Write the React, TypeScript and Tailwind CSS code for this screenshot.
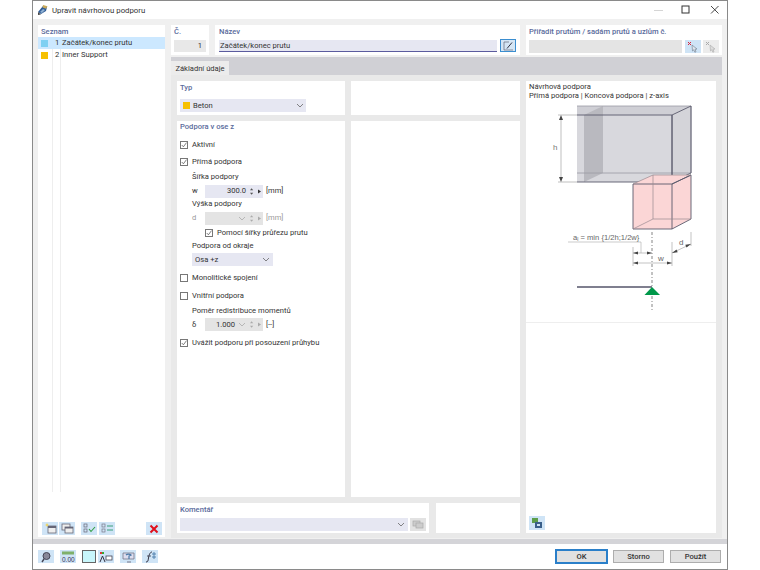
import React from "react";

const Chevron = ({ c = "#666" }: { c?: string }) => (
  <svg width="8" height="5" viewBox="0 0 8 5" className="shrink-0"><path d="M1 1l3 3 3-3" fill="none" stroke={c} strokeWidth="0.8" /></svg>
);

const Check = ({ on, className = "" }: { on?: boolean; className?: string }) => (
  <span className={`flex h-[8px] w-[8px] shrink-0 items-center justify-center border border-[#777] bg-white ${className}`}>
    {on && <svg width="8" height="8" viewBox="0 0 8 8"><path d="M1 4l2.200 2.400L7.400 0.800" fill="none" stroke="#444" strokeWidth="0.9" /></svg>}
  </span>
);

const CheckRow = ({ label, on, h = "h-[17px]" }: { label: string; on?: boolean; h?: string }) => (
  <div className={`flex items-center ${h}`}>
    <Check on={on} />
    <span className="ml-[4px]">{label}</span>
  </div>
);

const Spin = ({ dim }: { dim?: boolean }) => (
  <svg width="16" height="9" viewBox="0 0 16 9" className="shrink-0">
    <path d="M3 3.200L4.600 1.200 6.200 3.200zM3 5.800l1.600 2 1.600-2z" fill={dim ? "#aaa" : "#555"} />
    <path d="M11 2.500l3 2-3 2z" fill={dim ? "#aaa" : "#333"} />
  </svg>
);

const Panel = ({ className = "", children }: { className?: string; children?: React.ReactNode }) => (
  <div className={`bg-white ${className}`}>{children}</div>
);

const Head = ({ children, className = "" }: { children: React.ReactNode; className?: string }) => (
  <div className={`font-medium leading-[12px] text-[#5a6b9c] ${className}`}>{children}</div>
);

const ToolBtn = ({ children, className = "bg-[#cfe4f6]" }: { children?: React.ReactNode; className?: string }) => (
  <div className={`flex h-[13px] w-[16px] shrink-0 items-center justify-center ${className}`}>{children}</div>
);

const DialogBtn = ({ label, primary }: { label: string; primary?: boolean }) => (
  <div className={`flex h-[13px] w-[51px] items-center justify-center border bg-[#e1e1e1] font-medium text-[#333] ${primary ? "border-[#2a7fc9] outline outline-[0.5px] outline-[#2a7fc9]" : "border-[#adadad]"}`}>
    {label}
  </div>
);

const Win = () => (
  <div className="flex items-center">
    <svg width="12" height="12" viewBox="0 0 12 12" className="mr-[15px]"><path d="M1 6.500h9" stroke="#d5d5d5" strokeWidth="1" /></svg>
    <svg width="12" height="12" viewBox="0 0 12 12" className="mr-[17px]"><rect x="2" y="2" width="7" height="7" fill="none" stroke="#333" strokeWidth="1" /></svg>
    <svg width="12" height="12" viewBox="0 0 12 12" className="mr-[6px]"><path d="M2 2l7.500 7.500M9.500 2L2 9.500" stroke="#333" strokeWidth="0.9" /></svg>
  </div>
);

const Diagram = () => (
  <svg width="190" height="216" viewBox="526 102 190 216" className="block">
    <path d="M577 106H691V173H577z" fill="#dcdce0" />
    <path d="M577 115H672V182H577z" fill="#d8d8dd" />
    <path d="M577 106H691L672 115H577z" fill="#cfcfd5" />
    <path d="M672 115L691 106V173L672 182z" fill="#d4d4d9" />
    <path d="M584 115L603 106V173L584 182z" fill="#b9b9bf" />
    <path d="M577 106H691V173H577" fill="none" stroke="#9a9aa3" strokeWidth="0.8" />
    <path d="M577 115H672V182H577" fill="none" stroke="#5a5a6c" strokeWidth="0.9" />
    <path d="M672 115L691 106V173L672 182z" fill="none" stroke="#5a5a6c" strokeWidth="0.9" />
    <path d="M558 115H577M558 182H577M561 118V179" stroke="#a5a5a5" strokeWidth="0.7" fill="none" />
    <path d="M561 115l-2 5h4zM561 182l-2-5h4z" fill="#444" />
    <text x="553" y="150" fontSize="8" fill="#777" fontFamily="Liberation Sans, sans-serif">h</text>
    <path d="M633 184L653 175H691V219L672 229H633z" fill="#fbd6d6" />
    <path d="M633 184H672L691 175M672 184V229M633 184V229H672L691 219V175L672 184" fill="none" stroke="#5a5a6c" strokeWidth="0.9" />
    <path d="M633 229L653 219H691M653 175V219M633 184L653 175H691" fill="none" stroke="#9a8a90" strokeWidth="0.7" />
    <text x="573" y="240" fontSize="7.600" fill="#666" fontFamily="Liberation Sans, sans-serif">a<tspan fontSize="5" dy="1">l</tspan><tspan dy="-1"> = min {"{"}1/2h;1/2w{"}"}</tspan></text>
    <path d="M568 242H641V253" fill="none" stroke="#b5b5b5" strokeWidth="0.7" />
    <path d="M652 232V310" stroke="#666" strokeWidth="0.8" strokeDasharray="3 2 1 2" />
    <path d="M633 247V266M672 242V266M691 232V246M633 253H652M633 263H672M672 253L691 244" stroke="#aaa" strokeWidth="0.7" fill="none" />
    <path d="M633 253l5-1.500v3zM652 253l-5-1.500v3zM633 263l5-1.500v3zM672 263l-5-1.500v3zM672 253l4.500-3.400 1.200 2.700zM691 244l-4.500 3.400-1.200-2.700z" fill="#444" />
    <text x="658" y="261" fontSize="8" fill="#666" fontFamily="Liberation Sans, sans-serif">w</text>
    <text x="679" y="245" fontSize="8" fill="#666" fontFamily="Liberation Sans, sans-serif">d</text>
    <path d="M577 287H652" stroke="#55556a" strokeWidth="1.400" />
    <path d="M644.500 295L652 287L660 295z" fill="#00984a" />
  </svg>
);

const Cursor = ({ dim }: { dim?: boolean }) => (
  <svg width="14" height="12" viewBox="0 0 14 12">
    <path d="M2 1l3 3M5 1L2 4" stroke={dim ? "#aaa" : "#d9263a"} strokeWidth="1" />
    <path d="M6 4l5 4-2 .3 1 2.500-1.200.4-1-2.400L6.500 10z" fill={dim ? "#ddd" : "#dfe6ee"} stroke={dim ? "#aaa" : "#6b7a8c"} strokeWidth="0.6" />
  </svg>
);

export default function App() {
  return (
    <div className="h-[570px] w-[760px] bg-white pl-[32px] font-['Roboto',sans-serif] text-[7.6px] leading-[12px] text-[#333]">
      <div className="flex h-[570px] w-[696px] flex-col border border-[#8a8a8a]">
        {/* title bar */}
        <div className="flex h-[18px] shrink-0 items-center justify-between bg-white pl-[4px]">
          <div className="flex items-center">
            <svg width="12" height="12" viewBox="0 0 12 12" className="mr-[2px]">
              <path d="M1 8l5-6 4 1-1 4-5 3z" fill="#2f5c96" />
              <path d="M6 1l4.500 1.200-1.500 2.500-3.500-1.200z" fill="#c9a95a" />
              <path d="M1 8l3 2.500-3 .5z" fill="#444" />
              <path d="M3 8l3-3 2 1-3 3z" fill="#8fb0d2" />
            </svg>
            <span className="ml-[1px] pt-[2px] text-[7.800px] text-[#333]">Upravit návrhovou podporu</span>
          </div>
          <Win />
        </div>

        {/* body */}
        <div className="flex h-0 flex-1 bg-[#f0f0f0] pl-[5px] pr-[5px] pt-[6px]">
          <Panel className="relative flex h-[512px] w-[127px] shrink-0 flex-col">
            <Head className="ml-[3px] mt-[0px] h-[12px] pt-[1px]">Seznam</Head>
            <div className="relative flex-1">
              <div className="absolute bottom-[30px] left-[14px] top-0 w-px bg-[#eeeeee]" />
              <div className="absolute bottom-[30px] left-[22px] top-0 w-px bg-[#eeeeee]" />
              <div className="relative flex h-[12px] items-center bg-[#cce8ff]">
                <span className="ml-[3px] h-[7px] w-[7px] bg-[#7fd0f2]" />
                <span className="ml-[7px] w-[3px] text-right">1</span>
                <span className="ml-[4px]">Začátek/konec prutu</span>
              </div>
              <div className="relative flex h-[12px] items-center">
                <span className="ml-[3px] h-[7px] w-[7px] bg-[#f6c000]" />
                <span className="ml-[7px] w-[3px] text-right">2</span>
                <span className="ml-[4px]">Inner Support</span>
              </div>
            </div>
            <div className="mb-[2px] flex h-[13px] items-center pl-[4px]">
              <ToolBtn>
                <svg width="13" height="11" viewBox="0 0 13 11"><rect x="4" y="3" width="8" height="7" fill="#eee" stroke="#667" strokeWidth="0.8" /><path d="M4 3h8v2H4z" fill="#667" /><path d="M3 0l.6 1.400L5 2l-1.400.6L3 4l-.6-1.400L1 2l1.400-.6z" fill="#f4d03f" /></svg>
              </ToolBtn>
              <ToolBtn className="ml-[1px] bg-[#cfe4f6]">
                <svg width="13" height="11" viewBox="0 0 13 11"><rect x="1" y="1" width="8" height="6" fill="#eee" stroke="#667" strokeWidth="0.8" /><rect x="4" y="4" width="8" height="6" fill="#eee" stroke="#667" strokeWidth="0.8" /><path d="M4 4h8v1.500H4z" fill="#667" /></svg>
              </ToolBtn>
              <ToolBtn className="ml-[6px] bg-[#cfe4f6]">
                <svg width="13" height="11" viewBox="0 0 13 11"><rect x="1" y="1" width="3" height="3" fill="none" stroke="#667" strokeWidth="0.7" /><rect x="1" y="6" width="3" height="3" fill="none" stroke="#667" strokeWidth="0.7" /><path d="M6 6l2 2.500L12 4" fill="none" stroke="#2f9e44" strokeWidth="1.100" /></svg>
              </ToolBtn>
              <ToolBtn className="ml-[2px] bg-[#cfe4f6]">
                <svg width="13" height="11" viewBox="0 0 13 11"><rect x="1" y="1" width="3" height="3" fill="none" stroke="#778" strokeWidth="0.7" /><rect x="1" y="6" width="3" height="3" fill="none" stroke="#778" strokeWidth="0.7" /><path d="M6 3h6M6 7h6" stroke="#3a9e7a" strokeWidth="1" /></svg>
              </ToolBtn>
              <ToolBtn className="ml-[31px] bg-[#cfe4f6]">
                <svg width="10" height="10" viewBox="0 0 10 10"><path d="M1.500 1.500l7 7M8.500 1.500l-7 7" stroke="#e0101c" strokeWidth="2" /></svg>
              </ToolBtn>
            </div>
          </Panel>

          <div className="ml-[6px] flex w-[551px] shrink-0 flex-col">
            {/* top row */}
            <div className="flex h-[30px] shrink-0">
              <Panel className="w-[38px] pl-[3px] pt-[1px]">
                <Head>Č.</Head>
                <div className="mt-[2px] flex h-[12px] w-[32px] items-center justify-end bg-[#e8e8e8] pr-[4px]">1</div>
              </Panel>
              <Panel className="ml-[6px] w-[305px] pl-[4px] pt-[1px]">
                <Head>Název</Head>
                <div className="mt-[2px] flex items-start">
                  <div className="flex h-[12px] w-[278px] items-center border-b border-[#5b5b9e] bg-[#e6e7f2] pl-[1px]">Začátek/konec prutu</div>
                  <div className="ml-[3px] -mt-[1px] flex h-[13px] w-[16px] items-center justify-center border border-[#3b8ed0] bg-[#d5e6f5]">
                    <svg width="11" height="10" viewBox="0 0 11 10"><path d="M1 1h5M1 1v8h9" fill="none" stroke="#667" strokeWidth="0.7" /><path d="M4 7.500L9 1.500" stroke="#334" strokeWidth="1" /></svg>
                  </div>
                </div>
              </Panel>
              <Panel className="ml-[6px] w-[196px] pl-[3px] pt-[1px]">
                <Head>Přiřadit prutům / sadám prutů a uzlům č.</Head>
                <div className="mt-[2px] flex items-center">
                  <div className="h-[13px] w-[153px] bg-[#e4e4e4]" />
                  <ToolBtn className="ml-[3px] bg-[#cfe4f6]"><Cursor /></ToolBtn>
                  <ToolBtn className="ml-[2px] bg-[#ececec]"><Cursor dim /></ToolBtn>
                </div>
              </Panel>
            </div>

            {/* tab strip */}
            <div className="mt-[2px] flex h-[18px] shrink-0 items-end bg-[#d0d0d5]">
              <div className="flex h-[14px] w-[58px] items-center justify-center bg-[#ececec] pt-[1px] text-[#333]">Základní údaje</div>
            </div>

            {/* tab content */}
            <div className="flex h-[463px] shrink-0 bg-[#e9e9e9] pl-[6px] pt-[6px]">
              <div className="flex w-[343px] shrink-0 flex-col">
                <div className="flex h-[34px] shrink-0">
                  <Panel className="w-[168px] pl-[3px] pt-[1px]">
                    <Head>Typ</Head>
                    <div className="mt-[5px] flex h-[13px] w-[126px] items-center bg-[#e6e7f2] pl-[3px] pr-[2px]">
                      <span className="h-[7px] w-[7px] bg-[#f6c000]" />
                      <span className="ml-[3px] flex-1">Beton</span>
                      <Chevron />
                    </div>
                  </Panel>
                  <Panel className="ml-[6px] w-[169px]" />
                </div>
                <div className="mt-[6px] flex h-[376px] shrink-0">
                  <Panel className="w-[168px] pl-[3px]">
                    <Head className="h-[15px]">Podpora v ose z</Head>
                    <CheckRow label="Aktivní" on />
                    <CheckRow label="Přímá podpora" on />
                    <div className="ml-[12px]">
                      <div className="flex h-[13px] items-end">Šířka podpory</div>
                      <div className="flex h-[15px] items-center pt-[1px]">
                        <span className="w-[13px]">w</span>
                        <div className="flex h-[13px] w-[58px] items-center justify-end bg-[#e6e7f2]">
                          <span>300.0</span>
                          <span className="ml-[1px]"><Spin /></span>
                        </div>
                        <span className="ml-[3px]">[mm]</span>
                      </div>
                      <div className="flex h-[12px] items-end">Výška podpory</div>
                      <div className="flex h-[15px] items-center pt-[1px] text-[#999]">
                        <span className="w-[13px]">d</span>
                        <div className="flex h-[13px] w-[58px] items-center justify-end bg-[#e4e4e4]">
                          <Chevron c="#aaa" />
                          <span className="ml-[1px]"><Spin dim /></span>
                        </div>
                        <span className="ml-[3px]">[mm]</span>
                      </div>
                      <div className="ml-[13px] flex h-[15px] items-center">
                        <Check on />
                        <span className="ml-[4px]">Pomocí šířky průřezu prutu</span>
                      </div>
                      <div className="flex h-[11px] items-center">Podpora od okraje</div>
                      <div className="mt-[2px] flex h-[13px] w-[81px] items-center justify-between bg-[#e6e7f2] pl-[3px] pr-[3px]">
                        <span>Osa +z</span>
                        <Chevron />
                      </div>
                    </div>
                    <CheckRow label="Monolitické spojení" h="h-[18px] mt-[3px]" />
                    <CheckRow label="Vnitřní podpora" />
                    <div className="ml-[12px]">
                      <div className="flex h-[14px] items-center">Poměr redistribuce momentů</div>
                      <div className="flex h-[13px] items-center">
                        <span className="w-[13px]">δ</span>
                        <div className="flex h-[13px] w-[58px] items-center justify-end bg-[#e4e4e4]">
                          <span>1.000</span>
                          <span className="ml-[3px]"><Chevron c="#aaa" /></span>
                          <span className="ml-[1px]"><Spin dim /></span>
                        </div>
                        <span className="ml-[3px]">[--]</span>
                      </div>
                    </div>
                    <CheckRow label="Uvážit podporu při posouzení průhybu" on h="h-[18px] mt-[3px]" />
                  </Panel>
                  <Panel className="ml-[6px] w-[169px]" />
                </div>
                <div className="mt-[6px] flex h-[30px] shrink-0">
                  <Panel className="w-[252px] pl-[3px] pt-[1px]">
                    <Head>Komentář</Head>
                    <div className="mt-[2px] flex items-center">
                      <div className="flex h-[13px] w-[228px] items-center justify-end bg-[#e6e7f2] pr-[3px]"><Chevron /></div>
                      <ToolBtn className="ml-[2px] bg-[#e2e2e2]">
                        <svg width="12" height="9" viewBox="0 0 12 9"><rect x="1" y="1" width="7" height="5" fill="#ccc" stroke="#aaa" strokeWidth="0.7" /><rect x="4" y="3" width="7" height="5" fill="#ccc" stroke="#aaa" strokeWidth="0.7" /></svg>
                      </ToolBtn>
                    </div>
                  </Panel>
                  <Panel className="ml-[7px] w-[84px]" />
                </div>
              </div>
              <Panel className="ml-[6px] flex h-[452px] w-[190px] shrink-0 flex-col">
                <div className="pl-[3px] pt-[2px] leading-[8.500px]">
                  <div>Návrhová podpora</div>
                  <div>Přímá podpora | Koncová podpora | z-axis</div>
                </div>
                <div className="mt-[2px]"><Diagram /></div>
                <div className="mt-[4px] h-px bg-[#eeeeee]" />
                <div className="flex flex-1 items-end pb-[3px] pl-[3px]">
                  <ToolBtn className="h-[14px] w-[15px] bg-[#cfe4f6]">
                    <svg width="12" height="12" viewBox="0 0 12 12"><rect x="1" y="1" width="6" height="5" fill="#5d9e4a" /><rect x="4" y="5" width="7" height="6" fill="#3a5f8a" /><rect x="6" y="7" width="3" height="2" fill="#cfe4f6" /></svg>
                  </ToolBtn>
                </div>
              </Panel>
            </div>
            <div className="flex-1" />
          </div>
        </div>
        <div className="h-[5px] shrink-0 bg-[#d4d4d8]" />

        {/* bottom bar */}
        <div className="flex h-[25px] shrink-0 items-center bg-white pl-[5px] pr-[6px]">
          <ToolBtn>
            <svg width="12" height="12" viewBox="0 0 12 12"><circle cx="6.500" cy="5" r="3.500" fill="#889" stroke="#445" strokeWidth="1" /><path d="M4 8l-2 3" stroke="#445" strokeWidth="1.400" /></svg>
          </ToolBtn>
          <ToolBtn className="ml-[6px] bg-[#cfe4f6]">
            <svg width="14" height="12" viewBox="0 0 14 12"><rect x="1" y="0.500" width="12" height="3" fill="#7fb06b" /><text x="1" y="10.500" fontSize="6.500" fill="#335" fontFamily="Liberation Sans, sans-serif">0.00</text></svg>
          </ToolBtn>
          <div className="ml-[6px] h-[13px] w-[14px] border border-[#666] bg-[#c8f6fb]" />
          <ToolBtn className="ml-[2px] bg-[#cfe4f6]">
            <svg width="14" height="12" viewBox="0 0 14 12"><rect x="1" y="1" width="2" height="2" fill="#d33" /><rect x="3" y="1" width="2" height="2" fill="#3a3" /><path d="M1 11l2.500-6L6 11" fill="none" stroke="#334" strokeWidth="1" /><rect x="7" y="5" width="6" height="4" fill="#fff" stroke="#445" strokeWidth="0.8" /></svg>
          </ToolBtn>
          <ToolBtn className="ml-[6px] bg-[#cfe4f6]">
            <svg width="13" height="12" viewBox="0 0 13 12"><path d="M1 2h11v6H1z" fill="#dde" stroke="#778" strokeWidth="0.8" /><path d="M4 4a3 2 0 0 1 5 0l-2 1v3" fill="none" stroke="#4a7aa8" strokeWidth="1.200" /><path d="M5 11h4" stroke="#778" /></svg>
          </ToolBtn>
          <ToolBtn className="ml-[6px] bg-[#cfe4f6]">
            <svg width="13" height="12" viewBox="0 0 13 12"><path d="M2 11c2 0 2-1 2.500-4S6 1 8 1" fill="none" stroke="#334" strokeWidth="1" /><path d="M3 5h4" stroke="#334" strokeWidth="0.8" /><path d="M8 3h4M8 6h4M10 1v7" stroke="#4a7aa8" strokeWidth="0.9" /></svg>
          </ToolBtn>
          <div className="flex-1" />
          <DialogBtn label="OK" primary />
          <div className="ml-[6px]"><DialogBtn label="Storno" /></div>
          <div className="ml-[6px]"><DialogBtn label="Použít" /></div>
        </div>
      </div>
    </div>
  );
}
